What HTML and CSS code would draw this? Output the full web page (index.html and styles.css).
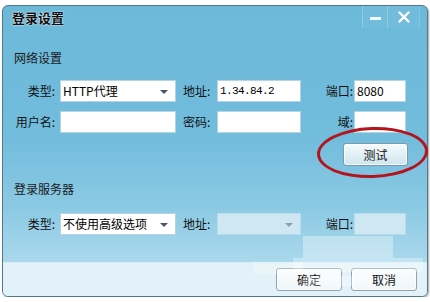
FILE: index.html
```html
<!DOCTYPE html>
<html>
	<head>
		<meta charset="utf-8" />
		<title>登录设置</title>
		<link rel="stylesheet" href="styles.css">
	</head>
	<body>
		<div class="window">
			<div class="titlebar">
				<div class="title">登录设置</div>
				<div class="controls">
					<div class="btn-min"><span></span></div>
					<div class="btn-close">
						<svg width="14" height="12" viewBox="0 0 14 12"><path d="M2.5 1.5 L11.5 10.5 M11.5 1.5 L2.5 10.5" stroke="#fff" stroke-width="2.3" stroke-linecap="round"/></svg>
					</div>
				</div>
			</div>

			<div class="heading first">网络设置</div>
			<div class="grid">
				<label class="lb1">类型:</label>
				<div class="field select"><span>HTTP代理</span><i class="arrow"></i></div>
				<label class="lb2">地址:</label>
				<div class="field mono">1.34.84.2</div>
				<label class="lb3">端口:</label>
				<div class="field">8080</div>

				<label class="lb1">用户名:</label>
				<div class="field"></div>
				<label class="lb2">密码:</label>
				<div class="field"></div>
				<label class="lb3">域:</label>
				<div class="field"></div>
			</div>
			<div class="test-row">
				<div class="button test">测试</div>
			</div>

			<div class="heading second">登录服务器</div>
			<div class="grid last">
				<label class="lb1">类型:</label>
				<div class="field select"><span>不使用高级选项</span><i class="arrow"></i></div>
				<label class="lb2">地址:</label>
				<div class="field select off"><span></span><i class="arrow"></i></div>
				<label class="lb3">端口:</label>
				<div class="field off"></div>
			</div>

			<div class="footer">
				<div class="button">确定</div>
				<div class="button">取消</div>
			</div>

			<div class="ring"></div>
			<div class="blur b1"></div>
			<div class="blur b2"></div>
			<div class="blur b3"></div>
			<div class="blur b4"></div>
		</div>
	</body>
</html>
```

FILE: styles.css
```css
html,body{
	margin: 0;
	padding: 0;
	background: #fff;
}
body{
	font-family: "Noto Sans CJK SC", "Liberation Sans", sans-serif;
	font-size: 12px;
	color: #111;
}
.window{
	position: relative;
	width: 424px;
	height: 290px;
	margin: 5px 2px 0 2px;
	border: 1px solid #56788a;
	border-radius: 6px;
	background: linear-gradient(#6cb9da 0%, #72bcdc 45%, #8ccae4 70%, #aad8ec 88%, #b0dbee 100%);
	display: flex;
	flex-direction: column;
	box-shadow: 1px 1px 2px rgba(0,0,0,0.35);
}
.titlebar{
	height: 24px;
	display: flex;
	justify-content: space-between;
}
.title{
	padding-left: 9px;
	line-height: 23px;
	font-size: 13px;
	font-weight: bold;
	color: #101010;
	text-shadow: 0 0 2px #e8f6fc, 0 0 1px #fff;
}
.controls{
	display: flex;
	margin-right: 7px;
}
.btn-min,.btn-close{
	height: 22px;
	display: flex;
	align-items: center;
	justify-content: center;
	border-left: 1px solid rgba(255,255,255,0.22);
	background: rgba(255,255,255,0.04);
}
.btn-min{
	width: 24px;
}
.btn-min span{
	display: block;
	width: 11px;
	height: 3px;
	margin-top: 3px;
	background: #f4fafd;
}
.btn-close{
	width: 31px;
	border-right: 1px solid rgba(255,255,255,0.15);
}
.heading{
	padding-left: 11px;
	line-height: 16px;
	font-size: 12px;
	color: #1a1a1a;
}
.heading.first{
	margin-top: 20px;
}
.heading.second{
	margin-top: 15px;
}
.grid{
	display: grid;
	grid-template-columns: 57px 116px 41px 84px 53px 52px;
	grid-auto-rows: 22px;
	row-gap: 9px;
	margin-top: 14px;
}
.grid.last{
	margin-top: 16px;
}
.grid label{
	line-height: 22px;
	font-size: 12px;
	color: #111;
	white-space: nowrap;
}
.lb1{
	text-align: right;
	padding-right: 5px;
}
.lb2{
	padding-left: 7px;
}
.lb3{
	text-align: right;
	padding-right: 1px;
}
.field{
	box-sizing: border-box;
	height: 22px;
	background: #fff;
	border: 1px solid #b6d3e2;
	padding-left: 2px;
	line-height: 20px;
	font-size: 12px;
	color: #000;
	position: relative;
	white-space: nowrap;
	overflow: hidden;
}
.field.mono{
	font-family: "Liberation Mono", monospace;
	font-size: 11px;
	letter-spacing: -0.6px;
}
.field.off{
	background: #cfe7f2;
	border-color: #b9dbea;
}
.arrow{
	position: absolute;
	right: 7px;
	top: 9px;
	width: 0;
	height: 0;
	border-left: 4px solid transparent;
	border-right: 4px solid transparent;
	border-top: 4px solid #46586a;
}
.off .arrow{
	border-top-color: #8aa3b2;
}
.test-row{
	display: flex;
	justify-content: flex-end;
	padding-right: 19px;
	margin-top: 10px;
}
.button{
	box-sizing: border-box;
	width: 65px;
	height: 23px;
	border: 1px solid #7d9aab;
	border-radius: 3px;
	background: linear-gradient(#f6fbfd, #e2f0f6 50%, #d0e5ee);
	text-align: center;
	line-height: 21px;
	font-size: 12px;
	color: #111;
	box-shadow: inset 0 0 0 1px rgba(255,255,255,0.7);
}
.footer{
	margin-top: auto;
	height: 33px;
	background: #e3f2f9;
	border-top: 1px solid #d6ecf6;
	border-radius: 0 0 5px 5px;
	display: flex;
	justify-content: flex-end;
	align-items: center;
	gap: 9px;
	padding-right: 10px;
}
.footer .button{
	width: 66px;
	background: linear-gradient(#fbfdfe, #eef6fa);
	border-color: #8fa4b0;
}
.ring{
	position: absolute;
	left: 314px;
	top: 121px;
	width: 105px;
	height: 45px;
	border: 3px solid #b3151c;
	border-radius: 50%;
	transform: rotate(-2deg);
}
.blur{
	position: absolute;
	background: rgba(255,255,255,0.35);
}
.b1{
	left: 300px;
	top: 230px;
	width: 90px;
	height: 22px;
}
.b2{
	left: 290px;
	top: 252px;
	width: 130px;
	height: 14px;
	background: rgba(255,255,255,0.3);
}
.b3{
	left: 250px;
	top: 256px;
	width: 50px;
	height: 12px;
	background: rgba(255,255,255,0.25);
}
.b4{
	left: 300px;
	top: 270px;
	width: 70px;
	height: 10px;
	background: rgba(255,255,255,0.3);
}
```
